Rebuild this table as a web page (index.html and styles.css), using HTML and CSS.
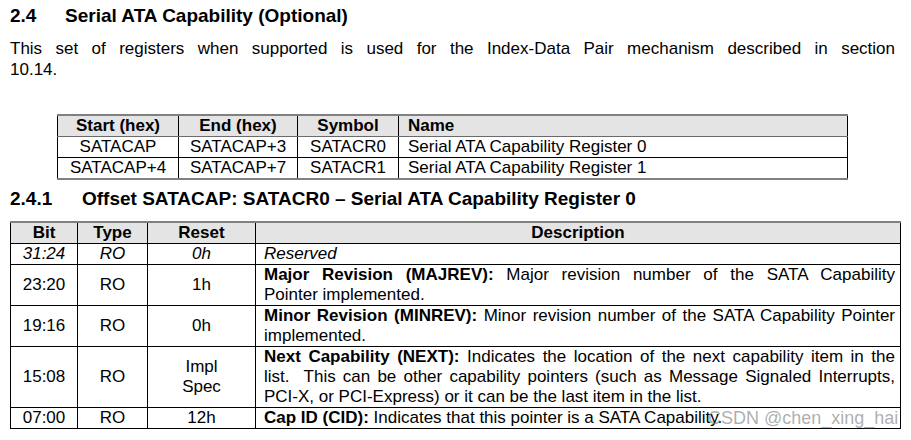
FILE: index.html
```html
<!DOCTYPE html>
<html>
<head>
<meta charset="utf-8">
<link rel="stylesheet" href="styles.css">
</head>
<body>
<div class="page">
  <h1 class="head"><span class="num num-a">2.4</span>Serial ATA Capability (Optional)</h1>
  <p class="para"><span class="jline">This set of registers when supported is used for the Index-Data Pair mechanism described in section</span>10.14.</p>

  <table class="map">
    <colgroup><col class="c1"><col class="c2"><col class="c3"><col class="c4"></colgroup>
    <thead>
      <tr><th>Start (hex)</th><th>End (hex)</th><th>Symbol</th><th class="left">Name</th></tr>
    </thead>
    <tbody>
      <tr><td>SATACAP</td><td>SATACAP+3</td><td>SATACR0</td><td class="left">Serial ATA Capability Register 0</td></tr>
      <tr><td>SATACAP+4</td><td>SATACAP+7</td><td>SATACR1</td><td class="left">Serial ATA Capability Register 1</td></tr>
    </tbody>
  </table>

  <h2 class="head sub"><span class="num num-b">2.4.1</span>Offset SATACAP: SATACR0 – Serial ATA Capability Register 0</h2>

  <table class="reg">
    <colgroup><col class="b1"><col class="b2"><col class="b3"><col class="b4"></colgroup>
    <thead>
      <tr><th>Bit</th><th>Type</th><th>Reset</th><th>Description</th></tr>
    </thead>
    <tbody>
      <tr class="it"><td>31:24</td><td>RO</td><td>0h</td><td class="desc">Reserved</td></tr>
      <tr><td>23:20</td><td>RO</td><td>1h</td><td class="desc"><span class="jline"><b>Major Revision (MAJREV):</b> Major revision number of the SATA Capability</span>Pointer implemented.</td></tr>
      <tr><td>19:16</td><td>RO</td><td>0h</td><td class="desc"><b>Minor Revision (MINREV):</b> Minor revision number of the SATA Capability Pointer implemented.</td></tr>
      <tr><td>15:08</td><td>RO</td><td>Impl<br>Spec</td><td class="desc"><b>Next Capability (NEXT):</b> Indicates the location of the next capability item in the list.&nbsp; This can be other capability pointers (such as Message Signaled Interrupts, PCI-X, or PCI-Express) or it can be the last item in the list.</td></tr>
      <tr><td>07:00</td><td>RO</td><td>12h</td><td class="desc"><b>Cap ID (CID):</b> Indicates that this pointer is a SATA Capability.</td></tr>
    </tbody>
  </table>
  <div class="mark">CSDN @chen_xing_hai</div>
</div>
</body>
</html>
```
FILE: styles.css
```css
html, body {
  margin: 0;
  padding: 0;
  background: #fff;
}
.page {
  position: relative;
  width: 911px;
  height: 440px;
  overflow: hidden;
  box-sizing: border-box;
  padding: 6px 11px 0 10px;
  font-family: "Liberation Sans", Arial, sans-serif;
  color: #000;
  font-size: 17px;
}
.head {
  margin: 0;
  font-size: 19px;
  line-height: 20px;
  font-weight: bold;
  white-space: nowrap;
}
.num {
  display: inline-block;
}
.num-a { width: 55px; }
.num-b { width: 72px; }
.para {
  margin: 12px 5px 0 0;
  line-height: 21px;
  text-align: justify;
}
.jline {
  display: block;
  text-align: justify;
  text-align-last: justify;
}
table {
  border-collapse: collapse;
  table-layout: fixed;
  font-size: 17px;
  line-height: 20px;
}
th, td {
  padding: 0;
  border: 1px solid #000;
  text-align: center;
  vertical-align: middle;
  font-weight: normal;
}
th {
  font-weight: bold;
  background: #e4e4e4;
}
.map {
  margin: 34px 0 0 47px;
  width: 790px;
}
.map thead tr th { border-top: 2px solid #808080; border-bottom: 1px solid #6a6a6a; }
.map tbody tr:last-child td { border-bottom: 2px solid #808080; }
.map .c1 { width: 121px; }
.map .c2 { width: 119px; }
.map .c3 { width: 101px; }
.map .c4 { width: 449px; }
.map .left { text-align: left; padding-left: 9px; }

.sub { margin-top: 9px; }

.reg {
  margin-top: 12px;
  width: 890px;
}
.reg thead tr th { border-top: 2px solid #808080; }
.reg .b1 { width: 67px; }
.reg .b2 { width: 70px; }
.reg .b3 { width: 108px; }
.reg .b4 { width: 645px; }
.reg .desc {
  text-align: justify;
  padding: 0 5px 0 8px;
}
.reg .it td { font-style: italic; }

.mark {
  position: absolute;
  left: 708px;
  top: 408px;
  font-size: 18px;
  line-height: 20px;
  color: rgba(120, 120, 120, 0.6);
  white-space: nowrap;
}
```
